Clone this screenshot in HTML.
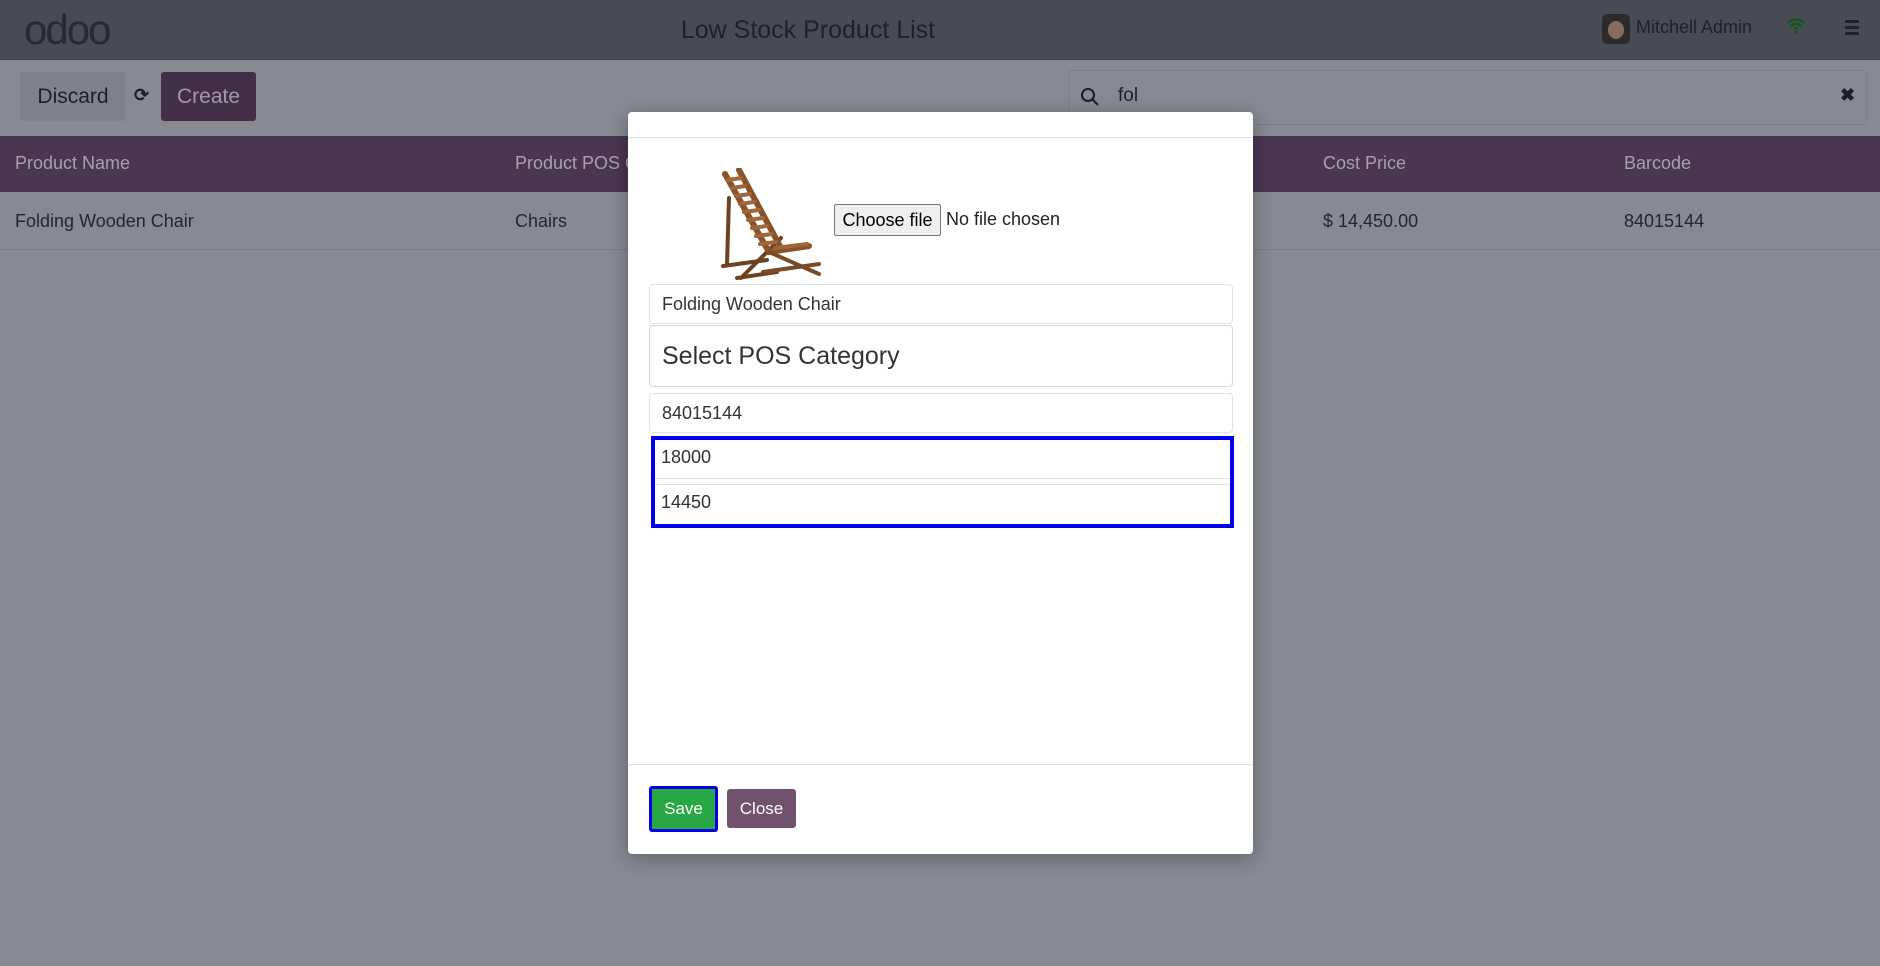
<!DOCTYPE html>
<html><head><meta charset="utf-8"><style>
*{box-sizing:border-box;margin:0;padding:0}
body{width:1880px;height:966px;overflow:hidden;background:#878a93;font-family:"Liberation Sans",sans-serif;position:relative;color:#2f3033}
.abs{position:absolute}
.nav{left:0;top:0;width:1880px;height:60px;background:#484b54;border-bottom:1px solid #3d4048}
.logo{left:24px;top:6px;font-size:42px;color:#2a2830;letter-spacing:-2px}
.title{left:0;width:1616px;text-align:center;top:16px;font-size:25px;color:#202124}
.btn{border-radius:3px;font-size:21px;display:flex;align-items:center;justify-content:center}
.hdr{left:0;top:136px;width:1880px;height:56px;background:#4b3651;color:#a9a0ad;font-size:18px}
.hdr span,.row span{position:absolute;top:17px}
.row{left:0;top:192px;width:1880px;height:58px;border-bottom:1px solid #7a7d85;font-size:18px;color:#24262b}
.row span{top:19px}
.modal{left:628px;top:112px;width:625px;height:742px;background:#fff;border-radius:4px;box-shadow:0 4px 20px rgba(0,0,0,.3)}
.inp{position:absolute;left:21px;width:584px;border:1px solid #e3e3e3;border-radius:4px;font-size:18px;color:#333;padding-left:12px;display:flex;align-items:center}
</style></head><body>
<div class="abs nav"></div>
<div class="abs logo">odoo</div>
<div class="abs title">Low Stock Product List</div>
<div class="abs" style="left:1602px;top:14px;width:28px;height:30px;background:#2c2a2e;border-radius:5px"><div style="margin:7px 6px;width:16px;height:18px;border-radius:50%;background:#8a6b5a"></div></div>
<div class="abs" style="left:1636px;top:17px;font-size:18px;color:#202124">Mitchell Admin</div>
<div class="abs" style="left:1786px;top:16px">
<svg width="20" height="18" viewBox="0 0 20 18"><path d="M2 7a11 11 0 0116 0M5 10a7 7 0 0110 0M8 13a3 3 0 014 0" stroke="#0d5a18" stroke-width="2.5" fill="none"/><circle cx="10" cy="16" r="1.6" fill="#0d5a18"/></svg></div>
<div class="abs" style="left:1845px;top:20px;width:14px"><div style="height:3px;background:#202124;margin-bottom:3px"></div><div style="height:3px;background:#202124;margin-bottom:3px"></div><div style="height:3px;background:#202124"></div></div>

<div class="abs btn" style="left:20px;top:72px;width:106px;height:49px;background:#7f828c;color:#1e1f23">Discard</div>
<div class="abs" style="left:134px;top:85px;font-size:18px;font-weight:bold;color:#1e1f23">⟳</div>
<div class="abs btn" style="left:161px;top:72px;width:95px;height:49px;background:#432f45;color:#a29aa7">Create</div>
<div class="abs" style="left:1068px;top:70px;width:799px;height:55px;border:1px solid #7c7f88;border-radius:4px"></div>
<svg class="abs" style="left:1080px;top:87px" width="20" height="20" viewBox="0 0 20 20"><circle cx="8" cy="8" r="6" stroke="#1e1f23" stroke-width="2" fill="none"/><path d="M12.5 12.5L18 18" stroke="#1e1f23" stroke-width="2"/></svg>
<div class="abs" style="left:1118px;top:85px;font-size:19px;color:#1e1f23">fol</div>
<div class="abs" style="left:1840px;top:85px;font-size:18px;font-weight:bold;color:#1e1f23">✖</div>

<div class="abs hdr"><span style="left:15px">Product Name</span><span style="left:515px">Product POS C</span><span style="left:1323px">Cost Price</span><span style="left:1624px">Barcode</span></div>
<div class="abs row"><span style="left:15px">Folding Wooden Chair</span><span style="left:515px">Chairs</span><span style="left:1323px">$ 14,450.00</span><span style="left:1624px">84015144</span></div>

<div class="abs modal">
<div style="position:absolute;left:0;top:25px;width:625px;border-top:1px solid #dedede"></div>
<svg style="position:absolute;left:91px;top:56px" width="106" height="114" viewBox="0 0 106 114">
<g fill="none" stroke-linecap="round">
<path d="M10 30L8 96M4 98L48 92" stroke="#6e4220" stroke-width="4"/>
<path d="M62 70L22 110M18 110L58 104" stroke="#6e4220" stroke-width="4"/>
<path d="M6 6L50 84L90 78M20 2L62 80" stroke="#8a5228" stroke-width="6"/>
<path d="M50 84L100 106M44 104L100 96" stroke="#7a4a25" stroke-width="4"/>
<path d="M9 12L22 10M13 20L26 18M17 28L31 26M21 36L35 34M25 44L40 42M29 52L44 50M33 60L48 58M37 68L53 66M41 76L57 74M56 80L88 76" stroke="#a0653a" stroke-width="4"/>
</g></svg>
<div style="position:absolute;left:206px;top:92px;width:107px;height:32px;border:1px solid #767676;border-radius:2px;background:#efefef;font-size:18px;display:flex;align-items:center;justify-content:center;color:#000">Choose file</div>
<div style="position:absolute;left:318px;top:97px;font-size:18px;color:#222">No file chosen</div>
<div class="inp" style="top:172px;height:40px">Folding Wooden Chair</div>
<div class="inp" style="top:213px;height:62px;font-size:25px;border-color:#d6d6d6">Select POS Category</div>
<div class="inp" style="top:281px;height:40px">84015144</div>
<div style="position:absolute;left:23px;top:324px;width:583px;height:92px;border:4px solid #0000ee"></div>
<div style="position:absolute;left:27px;top:366px;width:575px;border-top:1px solid #e3e3e3"></div>
<div style="position:absolute;left:27px;top:372px;width:575px;border-top:1px solid #e3e3e3"></div>
<div style="position:absolute;left:33px;top:335px;font-size:18px">18000</div>
<div style="position:absolute;left:33px;top:380px;font-size:18px">14450</div>
<div style="position:absolute;left:0;top:652px;width:625px;border-top:1px solid #dedede"></div>
<div class="btn" style="position:absolute;left:21px;top:674px;width:69px;height:46px;background:#28a745;border:3px solid #0000ee;color:#fff;font-size:17px">Save</div>
<div class="btn" style="position:absolute;left:99px;top:677px;width:69px;height:39px;background:#71526c;color:#fff;font-size:17px">Close</div>
</div>
</body></html>
